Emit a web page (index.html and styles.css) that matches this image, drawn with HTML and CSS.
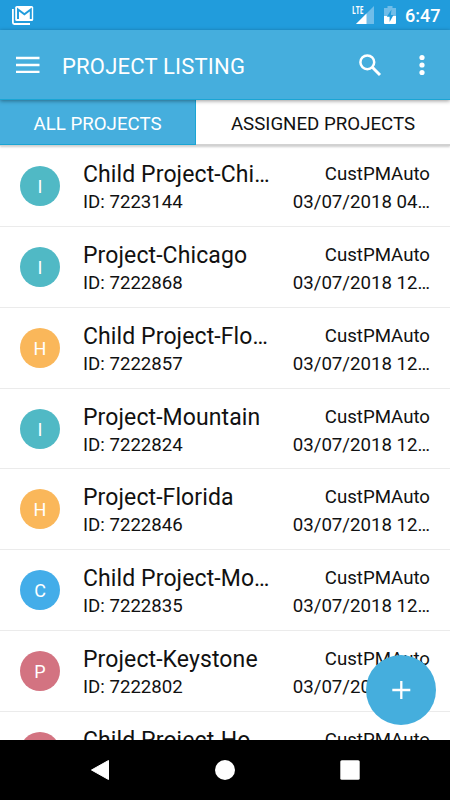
FILE: index.html
```html
<!DOCTYPE html>
<html lang="en">
<head>
<meta charset="utf-8">
<title>Project Listing</title>
<link rel="stylesheet" href="styles.css">
</head>
<body>
<div class="screen">
  <div class="status">
    <svg class="mail" width="24" height="20" viewBox="0 0 24 20"><path d="M.9 3v13.600a1.400 1.400 0 0 0 1.400 1.400H18" fill="none" stroke="#fff" stroke-width="1.800"/><rect x="3.200" y="0" width="18" height="15" rx="1.600" fill="#fff"/><path d="M6 13V3.500l6.400 4.700 6.400-4.700V13" fill="none" stroke="#219cdc" stroke-width="2"/></svg>
    <span class="lte">LTE</span>
    <svg class="signal" width="19" height="19" viewBox="0 0 19 19"><path d="M18 0v18H0z" fill="#6fbde9"/><path d="M10.500 7.500V18H0z" fill="#fff"/></svg>
    <svg class="battery" width="12" height="18" viewBox="0 0 12 18"><path d="M3.500 0h5v2H12v8H0V2h3.500z" fill="#70bde9"/><path d="M0 10h12v7a1 1 0 0 1-1 1H1a1 1 0 0 1-1-1z" fill="#fff"/><path d="M7.500 3.500L2.800 10.700h2.800v5.200L9.500 9H6.800z" fill="#219cdc"/></svg>
    <span class="clock">6:47</span>
  </div>
  <header class="bar">
    <svg class="menu" width="24" height="18" viewBox="0 0 24 18"><path d="M0 2h23.500M0 9h23.500M0 15.800h23.500" stroke="#fff" stroke-width="2.300"/></svg>
    <h1>PROJECT LISTING</h1>
    <svg class="search" width="23" height="23" viewBox="0 0 23 23"><circle cx="8.300" cy="8.300" r="6.900" fill="none" stroke="#fff" stroke-width="2.500"/><path d="M13.300 13.300L21 21" stroke="#fff" stroke-width="3"/></svg>
    <svg class="more" width="6" height="22" viewBox="0 0 6 22"><g fill="#fff"><circle cx="3" cy="3.500" r="2.600"/><circle cx="3" cy="11" r="2.600"/><circle cx="3" cy="18.500" r="2.600"/></g></svg>
  </header>
  <nav class="tabs"><span class="tab active">ALL PROJECTS</span><span class="tab">ASSIGNED PROJECTS</span></nav>
  <main class="list">
    <article class="row"><span class="avatar teal">I</span><div class="info"><h2>Child Project-Chi…</h2><p>ID: 7223144</p></div><div class="meta"><p>CustPMAuto</p><p>03/07/2018 04…</p></div></article>
    <article class="row"><span class="avatar teal">I</span><div class="info"><h2>Project-Chicago</h2><p>ID: 7222868</p></div><div class="meta"><p>CustPMAuto</p><p>03/07/2018 12…</p></div></article>
    <article class="row"><span class="avatar orange">H</span><div class="info"><h2>Child Project-Flo…</h2><p>ID: 7222857</p></div><div class="meta"><p>CustPMAuto</p><p>03/07/2018 12…</p></div></article>
    <article class="row"><span class="avatar teal">I</span><div class="info"><h2>Project-Mountain</h2><p>ID: 7222824</p></div><div class="meta"><p>CustPMAuto</p><p>03/07/2018 12…</p></div></article>
    <article class="row"><span class="avatar orange">H</span><div class="info"><h2>Project-Florida</h2><p>ID: 7222846</p></div><div class="meta"><p>CustPMAuto</p><p>03/07/2018 12…</p></div></article>
    <article class="row"><span class="avatar blue">C</span><div class="info"><h2>Child Project-Mo…</h2><p>ID: 7222835</p></div><div class="meta"><p>CustPMAuto</p><p>03/07/2018 12…</p></div></article>
    <article class="row"><span class="avatar rose">P</span><div class="info"><h2>Project-Keystone</h2><p>ID: 7222802</p></div><div class="meta"><p>CustPMAuto</p><p>03/07/2018 12…</p></div></article>
    <article class="row"><span class="avatar rose"></span><div class="info"><h2>Child Project-Ho…</h2></div><div class="meta"><p>CustPMAuto</p></div></article>
  </main>
  <div class="fab"><svg width="20" height="20" viewBox="0 0 20 20"><path d="M10.300 1v18M1.300 10h18" stroke="#fff" stroke-width="2.300"/></svg></div>
  <footer class="nav">
    <svg width="20" height="22" viewBox="0 0 20 22"><path d="M18.500 1.500v19L1.500 11z" fill="#fff" stroke="#fff" stroke-width="1" stroke-linejoin="round"/></svg>
    <svg width="20" height="20" viewBox="0 0 20 20"><circle cx="10" cy="10" r="10" fill="#fff"/></svg>
    <svg width="20" height="20" viewBox="0 0 20 20"><rect x="0.300" y="0.300" width="19.400" height="19.400" rx="1.500" fill="#fff"/></svg>
  </footer>
</div>
</body>
</html>
```
FILE: styles.css
```css
* { box-sizing: border-box; }
body, h1, h2, p { margin: 0; font-weight: 400; }
body { font-family: Roboto, sans-serif; color: #111; background: #fff; }
svg { display: block; flex: none; }
.screen { position: relative; display: flex; flex-direction: column; width: 450px; height: 800px; overflow: hidden; }
.status { flex: none; display: flex; height: 30px; padding-left: 12px; background: #219cdc; color: #fff; }
.mail { margin-top: 6px; }
.lte { margin: 5px 0 0 316px; width: 12px; font: 700 10.500px/10px "Open Sans", sans-serif; transform: scaleX(.64); transform-origin: left; }
.signal { margin: 6px 0 0 -8px; }
.battery { margin: 6px 0 0 9px; }
.clock { margin-left: 9px; font-size: 18px; line-height: 31px; font-weight: 500; }
.bar { flex: none; position: relative; z-index: 2; display: flex; align-items: center; height: 70px; padding-left: 16px; background: #45aedd; color: #fff; border-bottom: 1px solid #1aa5d4; box-shadow: 0 1px 4px rgba(0,0,0,.4); }
.menu { margin-top: 1px; }
h1 { flex: none; width: 319px; padding-left: 22px; font-size: 22px; line-height: 30px; letter-spacing: .2px; white-space: nowrap; margin-top: 4px; }
.search { margin-top: 1px; }
.more { margin-left: 37px; }
.tabs { flex: none; position: relative; z-index: 1; display: flex; height: 46px; background: #fff; border-bottom: 2px solid #d2d2d2; box-shadow: 0 1px 2px rgba(0,0,0,.2); }
.tab { flex: 1; text-align: center; font-size: 18.700px; line-height: 48px; color: #111; white-space: nowrap; }
.active { flex: none; width: 196px; height: 45px; background: #45aedd; border-right: 1px solid #1aa5d4; border-bottom: 1px solid #1aa5d4; color: #fff; }
.list { flex: 1; min-height: 0; overflow: hidden; }
.row { display: flex; height: 80.860px; padding: 0 20px; border-bottom: 1px solid #ebebeb; }
.avatar { flex: none; width: 40px; height: 40px; margin: 20px 23px 0 0; border-radius: 50%; color: #fff; font-size: 18px; line-height: 41px; text-align: center; }
.teal { background: #50b9c5; }
.orange { background: #fab75a; }
.blue { background: #43ade9; }
.rose { background: #d37381; }
.info { flex: 1; padding-top: 14px; white-space: nowrap; }
h2 { margin-bottom: -1px; font-size: 23px; line-height: 30px; letter-spacing: .1px; }
p { font-size: 18.650px; line-height: 26px; }
.meta { padding-top: 15px; text-align: right; white-space: nowrap; }
.meta p + p { margin-top: 2px; }
.fab { position: absolute; z-index: 3; left: 366px; top: 655px; width: 70px; height: 70px; border-radius: 50%; background: #45aedd; display: flex; align-items: center; justify-content: center; }
.nav { flex: none; display: flex; align-items: center; justify-content: center; gap: 105px; height: 60px; background: #000; }
```
